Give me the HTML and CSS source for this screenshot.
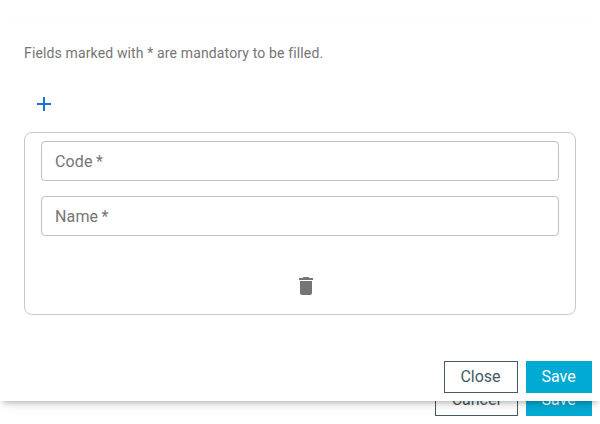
FILE: index.html
```html
<!DOCTYPE html>
<html lang="en">
<head>
<meta charset="utf-8">
<title>Add entry</title>
<link rel="stylesheet" href="styles.css">
</head>
<body>
<div class="page">
  <footer class="actions page-actions">
    <button class="btn outline wide">Cancel</button>
    <button class="btn solid">Save</button>
  </footer>
</div>
<main class="dialog">
  <p class="hint">Fields marked with * are mandatory to be filled.</p>
  <button class="icon-btn add" aria-label="Add">
    <svg viewBox="0 0 24 24"><path d="M19 13h-6v6h-2v-6H5v-2h6V5h2v6h6v2z"/></svg>
  </button>
  <section class="group">
    <div class="field"><span>Code *</span></div>
    <div class="field"><span>Name *</span></div>
    <button class="icon-btn delete" aria-label="Delete">
      <svg viewBox="0 0 24 24"><path d="M6 19c0 1.1.9 2 2 2h8c1.1 0 2-.9 2-2V7H6v12zM19 4h-3.500l-1-1h-5l-1 1H5v2h14V4z"/></svg>
    </button>
  </section>
  <footer class="actions">
    <button class="btn outline">Close</button>
    <button class="btn solid">Save</button>
  </footer>
</main>
</body>
</html>
```
FILE: styles.css
```css
* { box-sizing: border-box; }
body {
  margin: 0;
  height: 424px;
  overflow: hidden;
  background: #fff;
  font-family: Roboto, sans-serif;
  color: #757575;
}
button { margin: 0; padding: 0; border: 0; background: none; font: inherit; }
.page {
  height: 424px;
  display: flex;
  flex-direction: column;
  justify-content: flex-end;
}
.page-actions { padding-bottom: 8px; }
.dialog {
  position: absolute;
  top: 23px;
  left: 0;
  width: 600px;
  height: 378px;
  display: flex;
  flex-direction: column;
  padding-bottom: 8px;
  background: #fff;
  box-shadow: 0 5px 5px -3px rgba(0, 0, 0, .2), 0 5px 12px -3px rgba(0, 0, 0, .12);
}
.hint {
  margin: 20px 24px 0;
  font-size: 14px;
  line-height: 20px;
  letter-spacing: .14px;
}
.icon-btn { display: block; width: 24px; height: 24px; }
.icon-btn svg { display: block; width: 24px; height: 24px; fill: currentColor; }
.add { margin: 29px 0 0 32px; color: #1976d2; }
.group {
  height: 183px;
  margin: 16px 24px 0;
  padding: 8px 16px;
  border: 1px solid #c8c8c8;
  border-radius: 8px;
}
.field {
  height: 40px;
  padding: 1px 13px 0;
  border: 1px solid #c0c0c0;
  border-radius: 4px;
  font-size: 16px;
  line-height: 38px;
  letter-spacing: .15px;
  word-spacing: -.8px;
}
.field + .field { margin-top: 15px; }
.delete { margin: 38px 0 0 253px; color: #757575; }
.actions {
  display: flex;
  justify-content: flex-end;
  gap: 8px;
  margin-top: auto;
  padding-right: 8px;
}
.btn {
  height: 32px;
  width: 66px;
  padding-right: 1px;
  font-size: 16px;
  line-height: 30px;
}
.outline { width: 74px; border: 1px solid #455a64; color: #455a64; background: #fff; }
.wide { width: 83px; }
.solid { background: #00aad2; color: #fff; }
```
